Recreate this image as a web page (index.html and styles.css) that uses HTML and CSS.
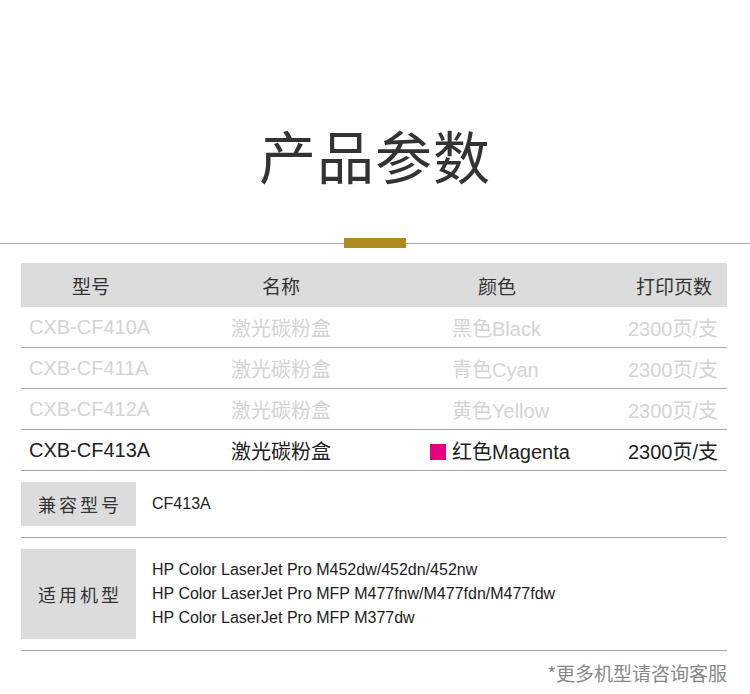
FILE: index.html
```html
<!DOCTYPE html>
<html lang="zh-CN">
<head>
    <meta charset="UTF-8">
    <meta name="viewport" content="width=device-width, initial-scale=1.0">
    <title>产品参数</title>
    <link rel="stylesheet" href="styles.css">
</head>
<body>
    <div class="page">
        <h1 class="title">产品参数</h1>

        <div class="divider"><span class="divider-bar"></span></div>

        <div class="params">
            <div class="params-row params-head">
                <div class="cell c-model">型号</div>
                <div class="cell c-name">名称</div>
                <div class="cell c-color">颜色</div>
                <div class="cell c-yield">打印页数</div>
            </div>
            <div class="params-row muted">
                <div class="cell c-model">CXB-CF410A</div>
                <div class="cell c-name">激光碳粉盒</div>
                <div class="cell c-color">黑色Black</div>
                <div class="cell c-yield">2300页/支</div>
            </div>
            <div class="params-row muted">
                <div class="cell c-model">CXB-CF411A</div>
                <div class="cell c-name">激光碳粉盒</div>
                <div class="cell c-color">青色Cyan</div>
                <div class="cell c-yield">2300页/支</div>
            </div>
            <div class="params-row muted">
                <div class="cell c-model">CXB-CF412A</div>
                <div class="cell c-name">激光碳粉盒</div>
                <div class="cell c-color">黄色Yellow</div>
                <div class="cell c-yield">2300页/支</div>
            </div>
            <div class="params-row">
                <div class="cell c-model">CXB-CF413A</div>
                <div class="cell c-name">激光碳粉盒</div>
                <div class="cell c-color"><span class="swatch"></span>红色Magenta</div>
                <div class="cell c-yield">2300页/支</div>
            </div>
        </div>

        <div class="spec">
            <div class="spec-label">兼容型号</div>
            <div class="spec-value">CF413A</div>
        </div>
        <div class="spec">
            <div class="spec-label spec-label-tall">适用机型</div>
            <div class="spec-value">
                HP Color LaserJet Pro M452dw/452dn/452nw<br>
                HP Color LaserJet Pro MFP M477fnw/M477fdn/M477fdw<br>
                HP Color LaserJet Pro MFP M377dw
            </div>
        </div>

        <p class="note">*更多机型请咨询客服</p>
    </div>
</body>
</html>
```

FILE: styles.css
```css
* {
    margin: 0;
    padding: 0;
    box-sizing: border-box;
}

body {
    font-family: "Liberation Sans", "Noto Sans CJK SC", sans-serif;
    background: white;
    color: #333;
}

.page {
    width: 750px;
    height: 694px;
    overflow: hidden;
}

.title {
    padding-top: 115px;
    text-align: center;
    font-family: "Noto Sans CJK SC", sans-serif;
    font-size: 57px;
    font-weight: 400;
    line-height: 78px;
    letter-spacing: 1px;
    color: #333;
}

.divider {
    margin-top: 45px;
    height: 10px;
    display: flex;
    justify-content: center;
    background: linear-gradient(#a8a8a8, #a8a8a8) 0 5px / 100% 1px no-repeat;
}

.divider-bar {
    width: 62px;
    height: 10px;
    background: #b0891f;
}

.params {
    margin: 15px 23px 0 21px;
}

.params-row {
    display: grid;
    grid-template-columns: 140px 240px 192px 1fr;
    align-items: center;
    height: 41px;
    border-bottom: 1px solid #a8a8a8;
    font-size: 20px;
    color: #222;
}

.params-head {
    height: 44px;
    background: #dcdcdc;
    border-bottom: none;
    font-family: "Noto Sans CJK SC", sans-serif;
    font-size: 19px;
    color: #333;
}

.muted {
    color: #d4d4d4;
}

.cell {
    white-space: nowrap;
}

.c-model {
    padding-left: 8px;
}

.c-name {
    text-align: center;
}

.c-color {
    padding-left: 51px;
}

.c-yield {
    text-align: right;
    padding-right: 9px;
}

.params-head .c-model,
.params-head .c-color {
    padding-left: 0;
    text-align: center;
}

.params-head .c-yield {
    padding-right: 15px;
}

.swatch {
    display: inline-block;
    width: 16px;
    height: 16px;
    margin-left: -22px;
    margin-right: 6px;
    background: #e4007f;
    vertical-align: -1px;
}

.spec {
    display: flex;
    align-items: center;
    margin: 0 23px 0 21px;
    padding: 11px 0;
    border-bottom: 1px solid #a8a8a8;
}

.spec-label {
    width: 115px;
    height: 44px;
    flex-shrink: 0;
    display: flex;
    align-items: center;
    justify-content: center;
    background: #dcdcdc;
    font-family: "Noto Sans CJK SC", sans-serif;
    font-size: 18px;
    letter-spacing: 3px;
    padding-left: 3px;
    color: #333;
}

.spec-label-tall {
    height: 90px;
}

.spec-value {
    padding-left: 16px;
    font-size: 16px;
    line-height: 24px;
    color: #222;
}

.note {
    margin: 8px 23px 0 0;
    text-align: right;
    font-family: "Noto Sans CJK SC", sans-serif;
    font-size: 19px;
    color: #888;
}
```
